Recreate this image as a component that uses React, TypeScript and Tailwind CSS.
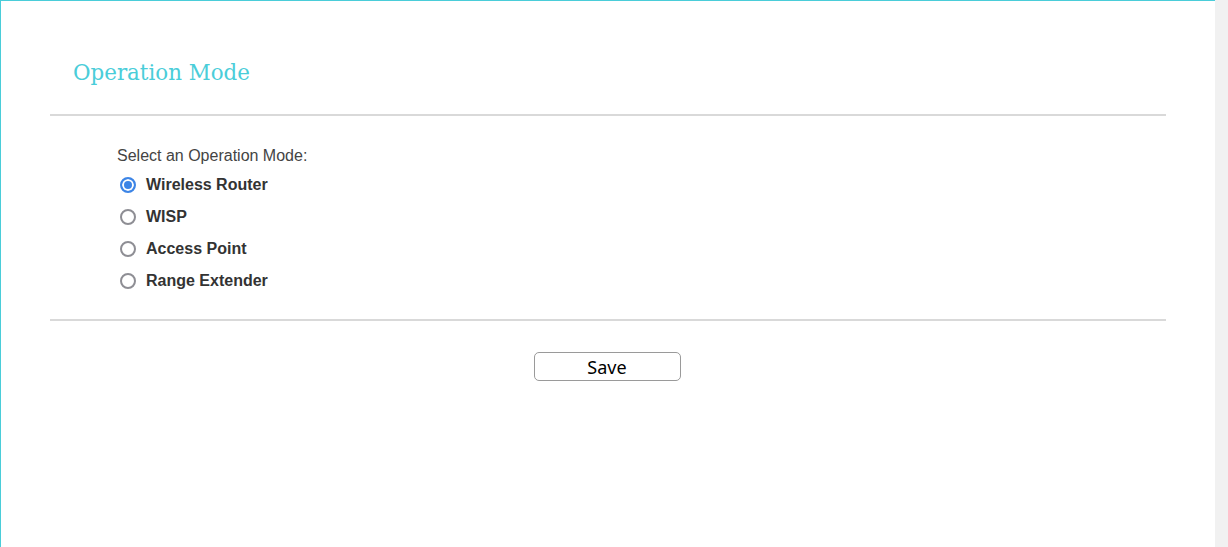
import { useState } from "react";

const modes = ["Wireless Router", "WISP", "Access Point", "Range Extender"];

export default function App() {
  const [mode, setMode] = useState("Wireless Router");

  return (
    <div className="flex h-[547px] w-[1228px] overflow-hidden bg-white">
      <div className="flex-1 border-l border-t border-[#4acdd9] bg-white">
        <div className="px-[49px]">
          {/* page title */}
          <div className="h-[113px] pl-[23px] pt-[58px]">
            <h1 className="text-[21.4px] leading-[28px] text-[#4acdd9] font-['DejaVu_Serif',serif]">
              Operation Mode
            </h1>
          </div>

          <div className="border-t-2 border-[#d9d9d9]" />

          <div className="pl-[67px] pt-[30px] pb-[28px] font-['Liberation_Sans',Arial,sans-serif]">
            <p className="text-[16px] leading-[20px] text-[#444]">Select an Operation Mode:</p>
            <div className="mt-[9px] flex flex-col gap-[12px]">
              {modes.map((m) => (
                <label key={m} className="flex h-[20px] items-center cursor-pointer">
                  <input
                    type="radio"
                    name="op-mode"
                    checked={mode === m}
                    onChange={() => setMode(m)}
                    className="ml-[3px] mr-[10px] h-4 w-4 appearance-none rounded-full border-2 border-[#8e8e94] bg-white checked:border-[#3d85e6] checked:bg-[#3d85e6] checked:shadow-[inset_0_0_0_2px_white]"
                  />
                  <span className="text-[16px] font-bold text-[#333]">{m}</span>
                </label>
              ))}
            </div>
          </div>

          <div className="border-t-2 border-[#d9d9d9]" />

          <div className="flex justify-center pt-[31px] pr-[2px]">
            <button className="h-[29px] w-[147px] rounded-[5px] border border-[#9a9a9a] bg-white text-[18px] leading-none text-black font-['Noto_Sans',sans-serif]">
              Save
            </button>
          </div>
        </div>
      </div>
      {/* scrollbar track */}
      <div className="w-[13px] bg-[#f1f1f1]" />
    </div>
  );
}
